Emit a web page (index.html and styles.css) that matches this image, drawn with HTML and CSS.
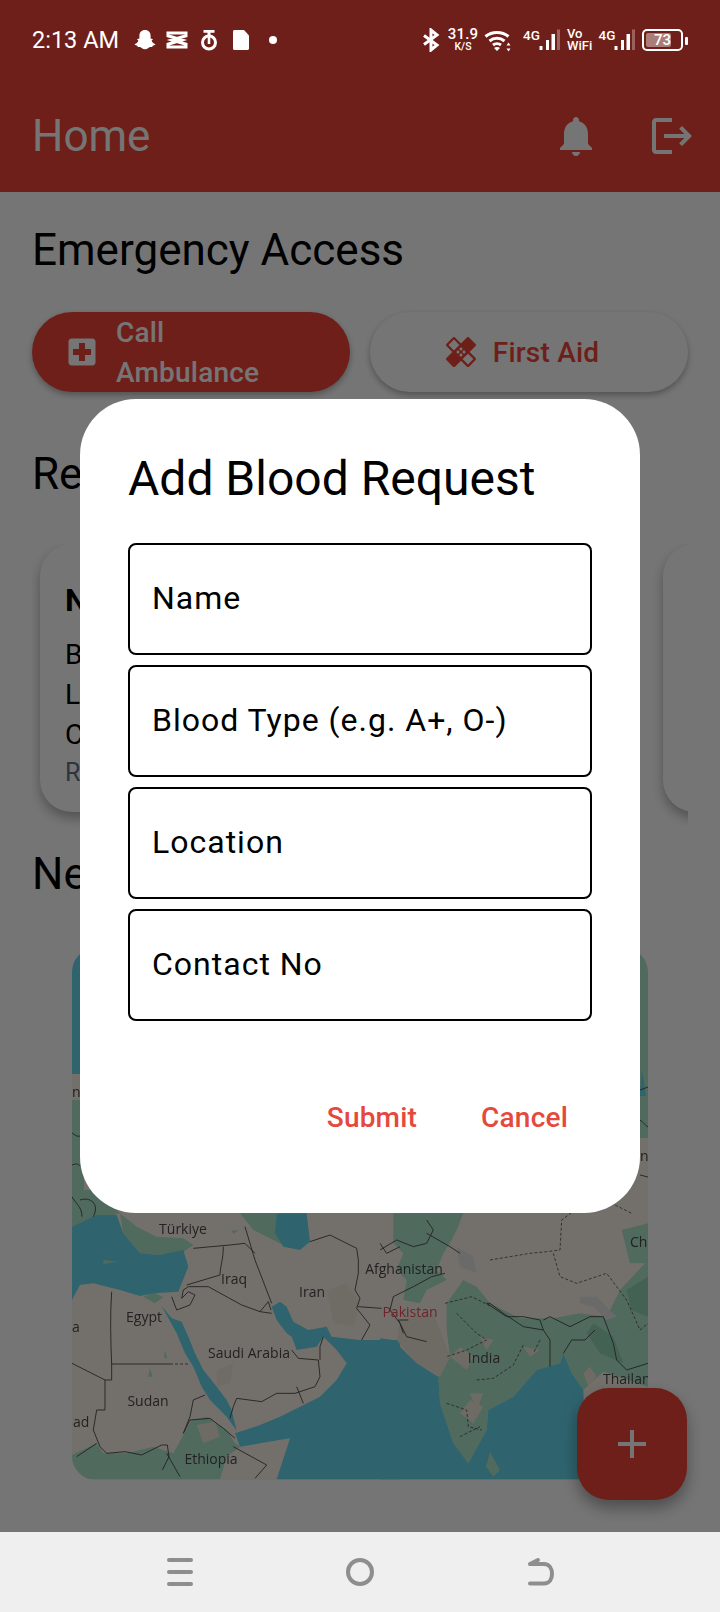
FILE: index.html
```html
<!DOCTYPE html>
<html lang="en">
<head>
<meta charset="utf-8">
<title>Home</title>
<link rel="stylesheet" href="styles.css">
</head>
<body>
<div class="screen">
  <header class="appbar-wrap">
    <div class="statusbar">
      <div class="status-left">
        <span class="time">2:13 AM</span>
        <svg class="si" viewBox="0 0 24 24"><path d="M12 2c-3.600 0-5.600 2.600-5.600 5.600v2.800l-1.900.5c-.6.3-.3 1 .9 1.500-.6 1.700-1.800 2.800-3.400 3.600-.5.3-.3.9.3 1.100l2 .6.5 1.400 2.300-.1c1.100.2 2.400 2.200 4.900 2.200s3.800-2 4.900-2.200l2.300.1.5-1.400 2-.6c.6-.2.8-.8.3-1.100-1.600-.8-2.800-1.900-3.400-3.600 1.200-.5 1.500-1.200.9-1.500l-1.900-.5V7.600C17.600 4.600 15.600 2 12 2z"/></svg>
        <svg class="si" viewBox="0 0 24 24"><path class="si-stroke" d="M3 5h18v2.800L7 12l14 4.200V19H3v-2.800L17 12 3 7.800z"/></svg>
        <svg class="si" viewBox="0 0 24 24"><path d="M6.500 2h11v2.800h-4v3h-3v-3h-4z"/><circle class="si-stroke" cx="12" cy="14.500" r="6.500"/><path d="M10.700 8h2.600v8h-2.600z"/></svg>
        <svg class="si" viewBox="0 0 24 24"><path d="M4 3.500C4 2.700 4.700 2 5.500 2H15l5 5.500v13c0 .8-.7 1.500-1.500 1.500h-13c-.8 0-1.500-.7-1.500-1.500z"/></svg>
        <svg class="si" viewBox="0 0 24 24"><circle cx="12" cy="12" r="4"/></svg>
      </div>
      <div class="status-right">
        <svg class="st-bt" viewBox="0 0 22 24"><path class="si-stroke" d="M4 7.500l13 9.500-6 5V2l6 5L4 16.500"/></svg>
        <div class="speed"><span class="speed-num">31.9</span><span class="speed-unit">K/S</span></div>
        <svg class="st-wifi" viewBox="0 0 28 24">
          <path class="wifi-arc" d="M1.500 8.500c6.500-5.500 16.500-5.500 23 0M5.500 13c4.400-3.600 10.600-3.600 15 0M9 17c2.300-1.800 5.700-1.800 8 0"/>
          <path d="M13 23l-3-3c1.700-1.300 4.300-1.300 6 0zM24.500 14.500l2 3h-4zM24.500 23.500l2-3h-4z"/>
        </svg>
        <svg class="st-net" viewBox="0 0 39 24">
          <text class="net-label" x="1" y="12">4G</text>
          <path d="M17.500 18h3v4h-3zM24 12h3v10h-3zM29.500 6h3.500v16h-3.500z"/><path class="bar-off" d="M35 1.500h3V22h-3z"/>
        </svg>
        <div class="vo"><span>Vo</span><span>WiFi</span></div>
        <svg class="st-net" viewBox="0 0 39 24">
          <text class="net-label" x="1.500" y="12">4G</text>
          <path d="M17.500 18h3v4h-3zM24 12h3v10h-3zM29.500 6h3.500v16h-3.500z"/><path class="bar-off" d="M35 1.500h3V22h-3z"/>
        </svg>
        <div class="battery"><span class="battery-fill"></span><span class="battery-num">73</span></div>
      </div>
    </div>
    <div class="appbar">
      <h1 class="appbar-title">Home</h1>
      <div class="appbar-actions">
        <svg class="action" viewBox="0 0 24 24"><path d="M12 22c1.100 0 2-.9 2-2h-4c0 1.100.9 2 2 2zm6-6v-5c0-3.070-1.630-5.640-4.500-6.320V4c0-.83-.67-1.500-1.500-1.500s-1.500.67-1.500 1.500v.68C7.640 5.360 6 7.920 6 11v5l-2 2v1h16v-1l-2-2z"/></svg>
        <svg class="action" viewBox="0 0 24 24"><path d="M17 7l-1.410 1.410L18.170 11H8v2h10.170l-2.580 2.580L17 17l5-5zM4 5h8V3H4c-1.100 0-2 .9-2 2v14c0 1.100.9 2 2 2h8v-2H4V5z"/></svg>
      </div>
    </div>
  </header>

  <main class="content">
    <h2 class="section-title">Emergency Access</h2>
    <div class="quick-row">
      <div class="quick quick-primary">
        <svg class="quick-icon" viewBox="0 0 24 24"><path d="M19 3H5c-1.100 0-1.990.9-1.990 2L3 19c0 1.100.9 2 2 2h14c1.100 0 2-.9 2-2V5c0-1.100-.9-2-2-2zm-1 11h-4v4h-4v-4H6v-4h4V6h4v4h4v4z"/></svg>
        <span class="quick-text">Call Ambulance</span>
      </div>
      <div class="quick quick-plain">
        <svg class="quick-icon" viewBox="0 0 24 24"><path d="M17.730 12.020l3.980-3.980c.39-.39.39-1.020 0-1.410l-4.340-4.340c-.39-.39-1.020-.39-1.410 0l-3.980 3.980L8 2.290c-.39-.39-1.030-.39-1.420 0L2.250 6.630c-.39.39-.39 1.020 0 1.410l3.980 3.980-3.980 3.980c-.39.39-.39 1.020 0 1.410l4.340 4.340c.39.39 1.020.39 1.410 0l3.980-3.980 3.980 3.980c.2.2.45.29.71.29.26 0 .51-.1.71-.29l4.340-4.340c.39-.39.39-1.020 0-1.410l-3.980-3.980zM12 9c.55 0 1 .45 1 1s-.45 1-1 1-1-.45-1-1 .45-1 1-1zm-4.710 1.960L3.660 7.340l3.630-3.630 3.620 3.620-3.620 3.630zM10 13c-.55 0-1-.45-1-1s.45-1 1-1 1 .45 1 1-.45 1-1 1zm2 2c-.55 0-1-.45-1-1s.45-1 1-1 1 .45 1 1-.45 1-1 1zm2-4c.55 0 1 .45 1 1s-.45 1-1 1-1-.45-1-1 .45-1 1-1zm2.660 9.340l-3.630-3.620 3.630-3.630 3.620 3.620-3.620 3.630z"/></svg>
        <span>First Aid</span>
      </div>
    </div>

    <h2 class="section-title section-second">Re</h2>
    <div class="cards">
      <article class="card">
        <div class="card-title">N</div>
        <div class="card-line">B</div>
        <div class="card-line">L</div>
        <div class="card-line">C</div>
        <div class="card-meta">R</div>
      </article>
      <article class="card"></article>
    </div>

    <h2 class="section-title section-third">Ne</h2>
    <div class="map">
      <svg class="map-svg" viewBox="72 948 576 532">
        <rect class="m-land" x="72" y="948" width="576" height="532"/>
        <!-- strips beside the dialog -->
        <path class="m-sea" d="M72 948h12v126H72z"/>
        <path class="m-green" d="M72 1100h12v115H72z"/>
        <path class="m-green" d="M636 948h12v190h-12z"/>
        <path class="m-sea" d="M642 1070l4 26-6 0z"/>
        <g class="m-border-thin"><path d="M72 1133c3 2 5 4 8 3M72 1165c3-1 6-2 8 1M72 1190l6 6 4-6M640 1120c3 2 6 6 8 7M640 1175l8 2M640 1090l8-3"/></g>

        <g transform="translate(60 1190) scale(.33333)">
          <path class="m-green" d="M36 0H100L180 70 100 90 36 110Z"/>
          <path class="m-green" d="M180 70L230 110 290 140 370 145 400 165 370 185 300 195 240 190 190 130Z"/>
          <path class="m-green" d="M540 70L650 70 650 130 690 175 640 150 580 120Z"/>
          <path class="m-green" d="M36 795L110 760 130 790 200 790 280 770 340 790 395 690 440 680 500 720 525 760 540 770 500 800 480 868 60 868 36 840Z"/>
          <path class="m-sand" d="M410 705L465 695 480 740 430 760Z"/>
          <path class="m-green" d="M250 320L280 307 310 322 285 340Z"/>
          <path class="m-sand2" d="M800 300L860 280 900 340 880 410 820 400Z"/>
          <path class="m-sand2" d="M470 540L520 520 510 580 470 590Z"/>

          <path class="m-sea" d="M36 110L110 75 170 75 190 130 240 190 300 195 370 180 385 230 355 305 280 310 240 318 180 300 100 280 60 285 36 330Z"/>
          <path class="m-sea" d="M305 348L335 385 365 395 385 440 405 490 430 540 470 590 500 630 515 660 530 722 500 680 450 630 425 590 400 530 375 490 350 430Z"/>
          <path class="m-sea" d="M650 70L740 70 750 155 720 180 670 170 645 130Z"/>
          <path class="m-sea" d="M800 410L815 440 900 450 1020 450 1020 868 650 868 690 745 600 760 540 770 525 730 600 705 660 680 720 650 780 620 830 570 860 520 830 480 800 450 790 440 770 470 710 480 695 440 680 430 650 390 635 350 660 335 680 350 700 395 745 420Z"/>
          <path class="m-sand3" d="M130 210L175 215 130 222ZM315 480L322 505 312 505ZM270 535L278 560 264 560ZM515 122L535 120 520 132Z"/>

          <g class="m-border">
            <path d="M36 20c10 20 30 30 30 60M60 30c30-10 60 10 40 50"/>
            <path d="M400 175L510 165 555 160 585 190M490 170C490 210 480 230 480 255L380 285M445 290L385 290 370 300 365 325 385 305 405 315 390 345 350 360 335 320"/>
            <path d="M445 290L545 345 600 365 635 370M600 365L625 335 633 360M555 110L585 210 635 340"/>
            <path d="M750 155L810 135 890 175 895 210 895 250 885 300 900 325 890 355 930 405 905 450"/>
            <path d="M895 350L965 355"/>
            <path d="M155 305C150 375 152 455 155 522L155 570 135 570 36 520M155 522L330 522"/>
            <path d="M135 570L135 660 110 660 105 690 100 720 120 770 140 790 195 785 245 795 305 765 322 765 327 800 307 840"/>
            <path d="M435 615L400 630 390 680 370 730 390 690 450 685 490 715 525 745"/>
            <path d="M695 480L715 505 775 510 780 560 765 590 705 610 650 610 605 635 530 625 520 650 510 685"/>
            <path d="M710 590L730 640M790 440L780 470 780 510"/>
            <path d="M520 770L620 825 585 865M110 760L50 800M320 790L360 860"/>
          </g>
          <g class="m-dash"><path d="M330 522L390 522"/></g>
        </g>

        <g transform="translate(380 1190) scale(.33333)">
          <path class="m-green" d="M40 70H250L230 120 210 160 190 190 170 240 200 270 140 300 120 340 70 330 80 270 50 240 70 190 40 160Z"/>
          <path class="m-green" d="M200 340L250 270 290 290 330 340 420 385 520 385 600 370 680 380 720 300 804 210 804 590 670 545 610 600 575 550 550 490 540 520 470 540 400 620 325 660 320 720 265 820 220 760 180 640 175 560 210 500 200 420Z"/>
          <path class="m-green" d="M725 120L804 100 804 220 750 220Z"/>
          <path class="m-sand" d="M210 500L240 470 280 500 260 540ZM300 440L340 450 320 480ZM240 670L270 630 310 650 280 700ZM270 610L310 610 290 660ZM430 470L480 480 450 500ZM630 530L650 560 625 590 610 550Z"/>
          <path class="m-greenD" d="M640 400L700 440 730 520 660 490 620 430ZM740 300L804 260 804 380 754 360Z"/>
          <path class="m-sand" d="M60 390L160 370 210 500 180 560 110 520 50 450Z"/>
          <path class="m-snow" d="M230 170L280 200 290 250 240 230ZM600 320L650 320 710 380 680 390 640 350 600 340Z"/>
          <path class="m-sea" d="M0 445L40 450 70 480 110 520 175 560 180 640 220 760 265 820 320 720 325 660 400 620 470 540 540 520 550 490 575 550 610 600 620 868 0 868Z"/>
          <path class="m-green" d="M330 785L360 840 340 860 318 830Z"/>
          <g class="m-border">
            <path d="M0 180L50 150 100 170 140 160 160 120 140 90M140 130L210 170 240 190M0 160L20 190 60 170"/>
            <path d="M195 250L155 260 100 290 40 320 30 360 60 400 70 430M85 390L55 390 80 440 140 455"/>
            <path d="M320 340L380 380 430 380 480 390 490 420 430 410 370 370 330 340Z"/>
            <path d="M490 390L510 380 570 410 630 380 670 380 700 460 710 510 740 540 804 520"/>
            <path d="M490 420L510 450 510 530M550 490L575 450 615 450 645 420"/>
          </g>
          <g class="m-dash">
            <path d="M330 210L450 190 500 185 540 180 545 90 585 60 665 60 695 40 755 70"/>
            <path d="M520 190L540 260 590 280 680 250 740 330 780 420 804 400"/>
            <path d="M195 340L275 320 335 350M230 370L290 430 320 450 260 480 200 500M290 570L340 565 400 525 430 465M200 640L260 660 265 710 305 720M240 740L300 710M480 450L460 490"/>
          </g>
        </g>

        <g class="m-labels">
          <text x="183" y="1234" text-anchor="middle">Türkiye</text>
          <text x="234" y="1284" text-anchor="middle">Iraq</text>
          <text x="312" y="1297" text-anchor="middle">Iran</text>
          <text x="404" y="1274" text-anchor="middle">Afghanistan</text>
          <text x="144" y="1322" text-anchor="middle">Egypt</text>
          <text class="m-red" x="410" y="1317" text-anchor="middle">Pakistan</text>
          <text x="249" y="1358" text-anchor="middle">Saudi Arabia</text>
          <text x="484" y="1363" text-anchor="middle">India</text>
          <text x="148" y="1406" text-anchor="middle">Sudan</text>
          <text x="211" y="1464" text-anchor="middle">Ethiopia</text>
          <text x="603" y="1384">Thailan</text>
          <text x="630" y="1247">Ch</text>
          <text x="640" y="1161">ng</text>
          <text x="73" y="1427">ad</text>
          <text x="72" y="1332">a</text>
          <text x="72" y="1097">n</text>
        </g>
      </svg>
    </div>
  </main>

  <button class="fab" type="button" aria-label="Add"><svg class="fab-icon" viewBox="0 0 28 28"><path d="M12 0h4v12h12v4H16v12h-4V16H0v-4h12z"/></svg></button>

  <div class="scrim"></div>

  <section class="dialog">
    <h3 class="dialog-title">Add Blood Request</h3>
    <div class="fields">
      <div class="field">Name</div>
      <div class="field">Blood Type (e.g. A+, O-)</div>
      <div class="field">Location</div>
      <div class="field">Contact No</div>
    </div>
    <div class="dialog-actions">
      <span class="dialog-btn">Submit</span>
      <span class="dialog-btn">Cancel</span>
    </div>
  </section>

  <nav class="navbar">
    <svg class="nav-icon" viewBox="0 0 32 32"><path d="M5 4h22M5 16h22M5 28h22"/></svg>
    <svg class="nav-icon" viewBox="0 0 32 32"><circle cx="16" cy="16" r="12"/></svg>
    <svg class="nav-icon" viewBox="0 0 32 32"><path d="M6 27.500h14c5.500 0 8-4.500 8-9.500s-2.500-10-8-10H6M6 8l8-4"/></svg>
  </nav>
</div>
</body>
</html>
```
FILE: styles.css
```css
* { box-sizing: border-box; }
html, body { margin: 0; padding: 0; }
body { font-family: Roboto, "Liberation Sans", sans-serif; color: #000; background: #fff; }
h1, h2, h3 { margin: 0; font-weight: 400; }

.screen {
  position: relative;
  width: 720px;
  height: 1612px;
  overflow: hidden;
  display: flex;
  flex-direction: column;
  background: #fff;
}

/* header */
.appbar-wrap { background: #f14537; flex: none; }
.statusbar {
  position: relative;
  z-index: 5;
  height: 80px;
  padding: 0 32px;
  display: flex;
  align-items: center;
  justify-content: space-between;
  color: #fff;
  fill: #fff;
}
.status-left { display: flex; align-items: center; gap: 8px; }
.time { font-size: 23.5px; width: 86px; margin-right: 7px; white-space: nowrap; }
.si { width: 24px; height: 24px; fill: #fff; }
.si-stroke { fill: none; stroke: #fff; stroke-width: 3; }
.status-right { display: flex; align-items: center; gap: 6px; }
.st-bt { width: 22px; height: 24px; }
.speed { width: 30px; display: flex; flex-direction: column; align-items: center; font-weight: 500; line-height: 1; }
.speed-num { font-size: 15px; letter-spacing: .2px; white-space: nowrap; }
.speed-unit { font-size: 10.5px; white-space: nowrap; }
.st-wifi { width: 28px; height: 24px; margin-right: 4px; }
.wifi-arc { fill: none; stroke: #fff; stroke-width: 3; }
.st-net { width: 39px; height: 24px; }
.net-label { font-size: 13.5px; font-weight: 500; fill: #fff; }
.bar-off { fill: #fff; opacity: .3; }
.vo { width: 24px; display: flex; flex-direction: column; font-size: 13px; font-weight: 500; line-height: 12.5px; }
.battery {
  position: relative;
  width: 41px;
  height: 22px;
  margin-right: 5px;
  border: 2px solid #fff;
  border-radius: 5px;
  display: flex;
  justify-content: center;
  align-items: center;
}
.battery::after {
  content: "";
  position: absolute;
  right: -7px;
  top: 6px;
  width: 3px;
  height: 8px;
  border-radius: 1px;
  background: #fff;
}
.battery-fill { position: absolute; left: 2px; top: 2px; bottom: 2px; width: 25px; background: rgba(255,255,255,.42); border-radius: 2px; }
.battery-num { position: relative; font-size: 15px; font-weight: 500; line-height: 1; }

.appbar {
  height: 112px;
  padding: 0 24px 0 32px;
  display: flex;
  align-items: center;
  justify-content: space-between;
  color: #fff;
}
.appbar-title { font-size: 44px; line-height: 52px; }
.appbar-actions { display: flex; gap: 48px; }
.action { width: 48px; height: 48px; fill: #fff; }

/* page */
.content { flex: 1; padding: 32px 32px 0; min-height: 0; }
.section-title { font-size: 44px; line-height: 52px; white-space: nowrap; }
.section-second { margin-top: 56px; }
.section-third { margin-top: 20px; }

.quick-row { display: flex; gap: 20px; margin-top: 36px; }
.quick {
  flex: 0 0 318px;
  height: 80px;
  border-radius: 40px;
  display: flex;
  align-items: center;
  font-size: 28px;
  font-weight: 500;
  letter-spacing: .2px;
  box-shadow: 0 3px 6px rgba(0,0,0,.3);
}
.quick-primary { background: #f14537; color: #fff; fill: #fff; padding: 0 32px; gap: 16px; }
.quick-plain { background: #fff; color: #f14537; fill: #f14537; justify-content: center; gap: 14px; padding-right: 16px; }
.quick-icon { width: 36px; height: 36px; flex: none; }
.quick-text { width: 150px; line-height: 40px; margin-top: 2px; }

.cards {
  display: flex;
  gap: 33px;
  margin-top: 44px;
  padding: 0 0 16px 8px;
  overflow: hidden;
}
.card {
  flex: none;
  width: 590px;
  height: 268px;
  padding: 33px 25px 0;
  border-radius: 32px;
  background: #fff;
  box-shadow: 0 6px 12px rgba(0,0,0,.3);
  font-size: 28px;
}
.card-title { font-size: 32px; line-height: 46px; font-weight: 700; margin-bottom: 12px; }
.card-line { line-height: 40px; }
.card-meta { font-size: 25px; line-height: 36px; color: #62738a; }

.map { margin: 48px 40px 0; height: 532px; border-radius: 24px; overflow: hidden; }
.map-svg { display: block; width: 576px; height: 532px; filter: blur(.35px); }
.m-land { fill: #fbf4ea; }
.m-sea { fill: #66d9f0; }
.m-green { fill: #aee6cc; }
.m-greenD { fill: #92d6b6; }
.m-sand { fill: #f0e9da; }
.m-sand2 { fill: #f2ebdf; }
.m-sand3 { fill: #aee6cc; }
.m-snow { fill: #e6e6ea; }
.m-border { fill: none; stroke: #4a4a4a; stroke-width: 2.7; }
.m-border-thin { fill: none; stroke: #4a4a4a; stroke-width: .9; }
.m-dash { fill: none; stroke: #4a4a4a; stroke-width: 2.4; stroke-dasharray: 9 6; }
.m-labels { font-family: "Open Sans", Roboto, sans-serif; font-size: 14px; font-weight: 500; fill: #4a4a4a; }
.m-red { fill: #f0505a; }

.fab {
  position: absolute;
  left: 577px;
  top: 1388px;
  width: 110px;
  height: 112px;
  border: 0;
  padding: 0;
  border-radius: 32px;
  background: #f14537;
  box-shadow: 0 8px 16px rgba(0,0,0,.35);
  display: flex;
  align-items: center;
  justify-content: center;
}
.fab-icon { width: 28px; height: 28px; fill: #fff; }

.scrim { position: absolute; inset: 0; background: rgba(0,0,0,.54); }

/* dialog */
.dialog {
  position: absolute;
  left: 80px;
  top: 399px;
  width: 560px;
  height: 814px;
  padding: 48px 48px 56px;
  border-radius: 56px;
  background: #fff;
  display: flex;
  flex-direction: column;
}
.dialog-title { font-size: 48px; line-height: 64px; margin-bottom: 32px; }
.fields { display: flex; flex-direction: column; gap: 10px; }
.field {
  height: 112px;
  border: 2px solid #000;
  border-radius: 8px;
  padding: 0 22px 3px;
  display: flex;
  align-items: center;
  font-size: 32px;
  letter-spacing: 1px;
}
.dialog-actions { margin-top: 56px; display: flex; justify-content: flex-end; gap: 16px; }
.dialog-btn {
  height: 80px;
  padding: 0 24px;
  display: flex;
  align-items: center;
  font-size: 28px;
  font-weight: 500;
  letter-spacing: .2px;
  color: #e5493d;
}

/* nav */
.navbar {
  position: relative;
  z-index: 5;
  flex: none;
  height: 80px;
  background: #efefef;
  display: flex;
  justify-content: center;
  align-items: center;
  gap: 148px;
}
.nav-icon { width: 32px; height: 32px; fill: none; stroke: #8e8e8e; stroke-width: 4; stroke-linecap: round; stroke-linejoin: round; }
```
